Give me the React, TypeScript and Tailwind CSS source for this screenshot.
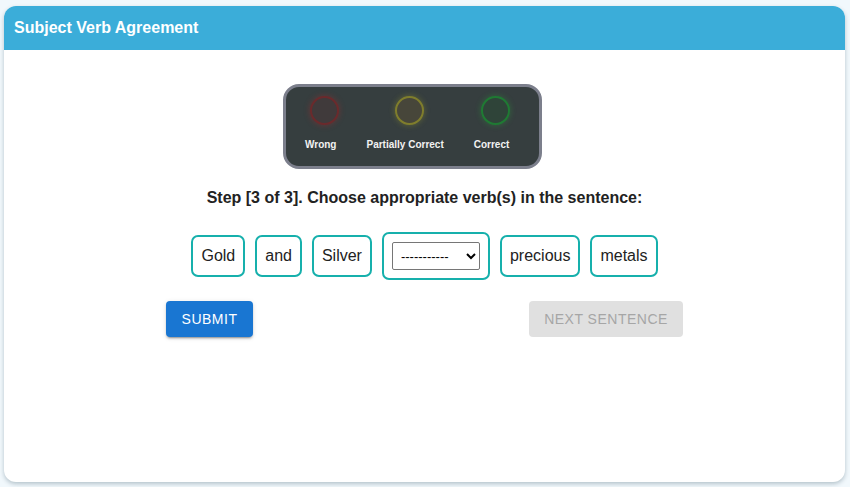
import React from "react";

function Light({ ring, fill, glow, label }: { ring: string; fill: string; glow: string; label: string }) {
  return (
    <div className="flex flex-col items-center">
      <div
        className="translate-x-[4px] w-[29px] h-[29px] rounded-full border-2"
        style={{ borderColor: ring, backgroundColor: fill, boxShadow: `0 0 6px ${glow}` }}
      />
      <div className="mt-[15px] text-[10px] font-bold text-[#f2f2f2] leading-none">{label}</div>
    </div>
  );
}

function Word({ children }: { children: React.ReactNode }) {
  return (
    <div className="h-[42px] px-[8px] flex items-center rounded-[7px] border-2 border-[#16b0ac] text-[16px] text-[#222]">
      {children}
    </div>
  );
}

export default function App() {
  return (
    <div className="w-[850px] h-[487px] bg-[#f1f8fc] pt-[6px] px-[4px] pb-[5px]" style={{ fontFamily: '"Liberation Sans", Arial, sans-serif' }}>
      <div className="h-[476px] w-[841px] bg-white rounded-[12px] overflow-hidden shadow-[0_2px_4px_rgba(0,40,60,0.25)] flex flex-col">
        <div className="h-[44px] bg-[#3badd9] flex items-center px-[10px]">
          <span className="text-white font-bold text-[16px]">Subject Verb Agreement</span>
        </div>
        <div className="flex flex-col items-center pt-[34px]">
          <div className="mr-[24px] w-[259px] h-[85px] rounded-[16px] border-[3px] border-[#7c7f8c] bg-[#363e3f] flex items-start gap-[30px] pt-[9px] pl-[19px]">
            <Light ring="#6a2a2c" fill="#403a3b" glow="rgba(200,40,40,0.35)" label="Wrong" />
            <Light ring="#7f7d2c" fill="#47463a" glow="rgba(200,200,40,0.3)" label="Partially Correct" />
            <Light ring="#1f7a33" fill="#2f4439" glow="rgba(40,200,60,0.3)" label="Correct" />
          </div>
          <div className="mt-[20px] text-[16px] font-bold text-[#222] leading-[18px]">
            Step [3 of 3]. Choose appropriate verb(s) in the sentence:
          </div>
          <div className="mt-[25px] flex items-center gap-[10px]">
            <Word>Gold</Word>
            <Word>and</Word>
            <Word>Silver</Word>
            <div className="h-[48px] px-[8px] flex items-center rounded-[7px] border-2 border-[#16b0ac]">
              <select className="h-[28px] w-[88px] border border-[#767676] rounded-[2px] text-[13px] text-black bg-white px-[4px]" defaultValue="">
                <option value="">-----------</option>
                <option value="is">is</option>
                <option value="are">are</option>
              </select>
            </div>
            <Word>precious</Word>
            <Word>metals</Word>
          </div>
          <div className="mt-[21px] w-[517px] flex justify-between">
            <button className="h-[36px] w-[87px] rounded-[4px] bg-[#1976d2] text-white text-[14px] uppercase tracking-[0.5px] shadow-[0_3px_1px_-2px_rgba(0,0,0,0.2),0_2px_2px_0_rgba(0,0,0,0.14),0_1px_5px_0_rgba(0,0,0,0.12)]">
              Submit
            </button>
            <button disabled className="h-[36px] w-[154px] rounded-[4px] bg-[#e0e0e0] text-[#a6a6a6] text-[14px] uppercase tracking-[0.5px]">
              Next Sentence
            </button>
          </div>
        </div>
      </div>
    </div>
  );
}
